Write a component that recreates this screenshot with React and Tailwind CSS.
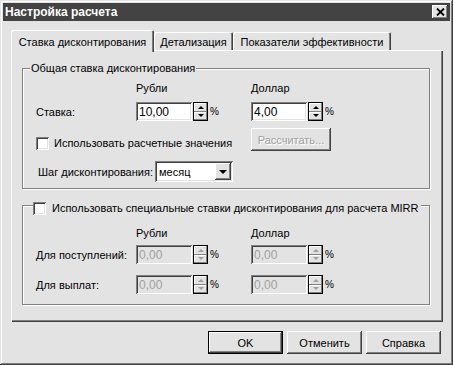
import React from "react";

const raised =
  "shadow-[inset_-1px_-1px_#404040,inset_1px_1px_#ffffff,inset_-2px_-2px_#808080,inset_2px_2px_#e3e3e3]";
const sunken =
  "shadow-[inset_1px_1px_#808080,inset_-1px_-1px_#ffffff,inset_2px_2px_#404040,inset_-2px_-2px_#e3e3e3]";

function Tri({ down, disabled }) {
  if (down) {
    return (
      <div
        className={
          "w-0 h-0 border-l-[3px] border-r-[3px] border-t-[3px] border-l-transparent border-r-transparent " +
          (disabled ? "border-t-[#a0a0a0]" : "border-t-black")
        }
      />
    );
  }
  return (
    <div
      className={
        "w-0 h-0 border-l-[3px] border-r-[3px] border-b-[3px] border-l-transparent border-r-transparent " +
        (disabled ? "border-b-[#a0a0a0]" : "border-b-black")
      }
    />
  );
}

function Spin({ disabled }) {
  return (
    <div className="w-[15px] h-[19px] ml-[1px] shrink-0 flex flex-col border border-black bg-[#e3e3e3]">
      <div className="flex-1 flex items-center justify-center shadow-[inset_-1px_-1px_#808080,inset_1px_1px_#ffffff]">
        <Tri disabled={disabled} />
      </div>
      <div className="flex-1 flex items-center justify-center shadow-[inset_-1px_-1px_#808080,inset_1px_1px_#ffffff]">
        <Tri down disabled={disabled} />
      </div>
    </div>
  );
}

function NumField({ value, disabled }) {
  return (
    <div className="flex items-center">
      <div
        className={
          "w-[56px] h-[19px] shrink-0 flex items-center pl-[3px] text-[12px] " +
          sunken +
          (disabled ? " bg-[#e3e3e3] text-[#a0a0a0]" : " bg-white text-black")
        }
      >
        {value}
      </div>
      <Spin disabled={disabled} />
      <span className="ml-[2px] text-[10px]">%</span>
    </div>
  );
}

function Check() {
  return <div className={"w-[13px] h-[13px] bg-white shrink-0 " + sunken} />;
}

function Btn({ children, def, disabled, w = "w-[75px]" }) {
  if (def) {
    return (
      <div className={w + " h-[23px] shrink-0 border border-black bg-[#e3e3e3]"}>
        <div className={"w-full h-full flex items-center justify-center " + raised}>{children}</div>
      </div>
    );
  }
  return (
    <div
      className={
        w +
        " h-[23px] shrink-0 flex items-center justify-center bg-[#e3e3e3] " +
        raised +
        (disabled ? " text-[#a0a0a0] [text-shadow:1px_1px_0_#ffffff]" : "")
      }
    >
      {children}
    </div>
  );
}

export default function App() {
  return (
    <div
      className={
        "w-[453px] h-[365px] bg-[#e3e3e3] p-[3px] flex flex-col text-[11px] leading-[14px] whitespace-nowrap text-black font-['Liberation_Sans',Arial,sans-serif] shadow-[inset_-1px_-1px_#404040,inset_1px_1px_#e3e3e3,inset_-2px_-2px_#808080,inset_2px_2px_#ffffff]"
      }
    >
      {/* title bar */}
      <div className="h-[18px] bg-[#434343] flex items-center justify-between pl-[2px] pr-[2px]">
        <span className="text-white font-bold text-[12px]">Настройка расчета</span>
        <div className={"w-[16px] h-[14px] bg-[#e3e3e3] flex items-center justify-center " + raised}>
          <svg width="9" height="8" viewBox="0 0 9 8">
            <path d="M1 0.5 L8 7.5 M8 0.5 L1 7.5" stroke="#000" strokeWidth="1.8" />
          </svg>
        </div>
      </div>

      {/* tabs */}
      <div className="ml-[8px] mt-[9px] h-[20px] flex items-start relative z-10">
        <div className="w-[143px] h-[22px] bg-[#e3e3e3] flex justify-center pt-[5px] rounded-t-[2px] shadow-[inset_1px_1px_#ffffff,inset_-1px_0_#404040,inset_-2px_0_#808080]">
          Ставка дисконтирования
        </div>
        <div className="mt-[2px] w-[79px] h-[18px] flex justify-center pt-[3px] rounded-t-[2px] shadow-[inset_1px_1px_#ffffff,inset_-1px_0_#404040,inset_-2px_0_#808080]">
          Детализация
        </div>
        <div className="mt-[2px] w-[158px] h-[18px] flex justify-center pt-[3px] rounded-t-[2px] shadow-[inset_1px_1px_#ffffff,inset_-1px_0_#404040,inset_-2px_0_#808080]">
          Показатели эффективности
        </div>
      </div>

      {/* panel */}
      <div className="ml-[8px] w-[432px] h-[272px] flex flex-col shadow-[inset_1px_1px_#ffffff,inset_-1px_-1px_#404040,inset_-2px_-2px_#808080]">
        {/* group 1 */}
        <div className="relative mt-[18px] ml-[11px] w-[408px] h-[121px] border border-[#808080] shadow-[inset_1px_1px_#ffffff,1px_1px_#ffffff] flex flex-col">
          <span className="absolute left-[7px] -top-[8px] px-[1px] bg-[#e3e3e3]">
            Общая ставка дисконтирования
          </span>
          <div className="mt-[12px] h-[14px] flex pl-[113px]">
            <span className="w-[115px]">Рубли</span>
            <span>Доллар</span>
          </div>
          <div className="mt-[7px] h-[19px] flex items-center pl-[13px]">
            <span className="w-[100px]">Ставка:</span>
            <div className="w-[115px]">
              <NumField value="10,00" />
            </div>
            <NumField value="4,00" />
          </div>
          <div className="mt-[7px] h-[23px] flex pl-[13px]">
            <div className="w-[215px] flex items-center self-start mt-[8px]">
              <Check />
              <span className="ml-[5px]">Использовать расчетные значения</span>
            </div>
            <Btn disabled w="w-[80px]">
              Рассчитать...
            </Btn>
          </div>
          <div className="mt-[10px] h-[21px] flex items-center pl-[15px]">
            <span className="w-[117px]">Шаг дисконтирования:</span>
            <div className={"w-[78px] h-[21px] bg-white flex items-center justify-between pl-[4px] pr-[2px] " + sunken}>
              <span>месяц</span>
              <div className={"w-[16px] h-[17px] bg-[#e3e3e3] flex items-center justify-center " + raised}>
                <div className="w-0 h-0 border-l-[4px] border-r-[4px] border-t-[4px] border-l-transparent border-r-transparent border-t-black" />
              </div>
            </div>
          </div>
        </div>

        {/* group 2 */}
        <div className="relative mt-[16px] ml-[11px] w-[408px] h-[100px] border border-[#808080] shadow-[inset_1px_1px_#ffffff,1px_1px_#ffffff] flex flex-col">
          <div className="absolute left-[10px] -top-[5px] flex items-center bg-[#e3e3e3] pr-[2px]">
            <Check />
            <span className="ml-[6px]">Использовать специальные ставки дисконтирования для расчета MIRR</span>
          </div>
          <div className="mt-[20px] h-[14px] flex pl-[113px]">
            <span className="w-[115px]">Рубли</span>
            <span>Доллар</span>
          </div>
          <div className="mt-[5px] h-[19px] flex items-center pl-[13px]">
            <span className="w-[100px]">Для поступлений:</span>
            <div className="w-[115px]">
              <NumField value="0,00" disabled />
            </div>
            <NumField value="0,00" disabled />
          </div>
          <div className="mt-[11px] h-[19px] flex items-center pl-[13px]">
            <span className="w-[100px]">Для выплат:</span>
            <div className="w-[115px]">
              <NumField value="0,00" disabled />
            </div>
            <NumField value="0,00" disabled />
          </div>
        </div>
      </div>

      {/* bottom buttons */}
      <div className="mt-[9px] flex justify-end gap-[4px] pr-[9px]">
        <Btn def>OK</Btn>
        <Btn>Отменить</Btn>
        <Btn>Справка</Btn>
      </div>
    </div>
  );
}
